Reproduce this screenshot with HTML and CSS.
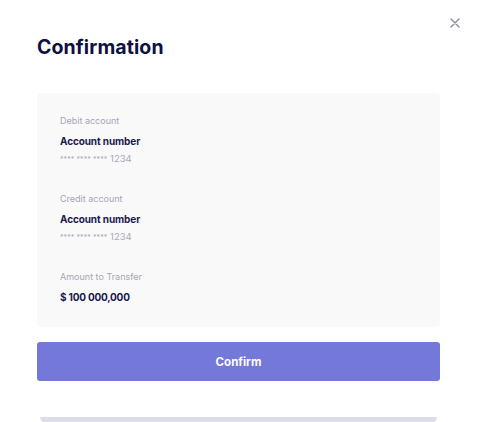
FILE: index.html
```html
<!DOCTYPE html>
<html lang="en">
<head>
<meta charset="utf-8">
<title>Confirmation</title>
<link rel="stylesheet" href="styles.css">
</head>
<body>
<div class="modal">
  <button class="close" aria-label="Close">
    <svg width="10" height="10" viewBox="0 0 10 10"><path d="M1 1L9 9M9 1L1 9" stroke="#8a8c9c" stroke-width="1.4" stroke-linecap="round"/></svg>
  </button>
  <h1 class="title">Confirmation</h1>
  <div class="card">
    <div class="group">
      <div class="label">Debit account</div>
      <div class="name">Account number</div>
      <div class="masked"><span class="stars">**** **** ****</span> 1234</div>
    </div>
    <div class="group">
      <div class="label">Credit account</div>
      <div class="name">Account number</div>
      <div class="masked"><span class="stars">**** **** ****</span> 1234</div>
    </div>
    <div class="group">
      <div class="label">Amount to Transfer</div>
      <div class="amount">$ 100 000,000</div>
    </div>
  </div>
  <button class="confirm">Confirm</button>
  <div class="under"></div>
</div>
</body>
</html>
```
FILE: styles.css
```css
html, body {
  margin: 0;
  padding: 0;
  background: #ffffff;
  overflow: hidden;
}
body {
  font-family: "Inter", "Liberation Sans", sans-serif;
}
.modal {
  position: relative;
  padding: 35px 38px 0 37px;
  display: flex;
  flex-direction: column;
}
.close {
  position: absolute;
  top: 18px;
  right: 18px;
  width: 10px;
  height: 10px;
  padding: 0;
  border: 0;
  background: none;
  display: flex;
}
.title {
  margin: 0;
  font-size: 19.5px;
  line-height: 24px;
  font-weight: 700;
  color: #0f1140;
  letter-spacing: 0.1px;
}
.card {
  margin-top: 34px;
  background: #f9f9fa;
  border-radius: 4px;
  padding: 22px 23px 23px;
  display: flex;
  flex-direction: column;
  gap: 27px;
}
.group {
  display: flex;
  flex-direction: column;
}
.label {
  font-size: 9px;
  line-height: 12px;
  color: #a4a6b4;
}
.name {
  margin-top: 7px;
  font-size: 10px;
  line-height: 14px;
  font-weight: 700;
  color: #191b4d;
  letter-spacing: -0.1px;
}
.masked {
  margin-top: 5px;
  font-size: 9.5px;
  line-height: 12px;
  color: #a8aab6;
}
.stars {
  font-size: 7px;
  letter-spacing: 0.1px;
}
.amount {
  margin-top: 7px;
  font-size: 10px;
  line-height: 14px;
  font-weight: 700;
  color: #191b4d;
  letter-spacing: -0.2px;
}
.confirm {
  margin-top: 15px;
  height: 39px;
  border: 0;
  border-radius: 3px;
  background: #7378d9;
  color: #ffffff;
  font-family: inherit;
  font-size: 11.5px;
  font-weight: 700;
}
.under {
  margin: 36px 3px 0;
  height: 8px;
  background: #dcdde8;
  border-radius: 0 0 14px 14px / 0 0 8px 8px;
}
```
